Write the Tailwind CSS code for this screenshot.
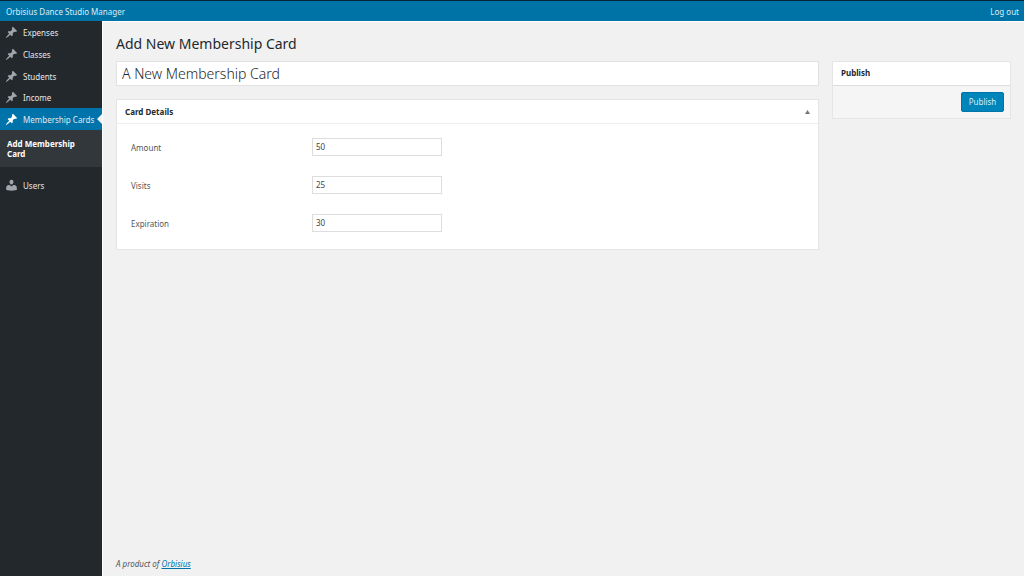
<!DOCTYPE html>
<html lang="en">
  <head>
    <meta charset="UTF-8" />
    <meta name="viewport" content="width=device-width, initial-scale=1.0" />
    <title>Add New Membership Card</title>
    <script src="https://cdn.jsdelivr.net/npm/@tailwindcss/browser@4"></script>
  </head>
  <body
    class="flex min-h-screen flex-col bg-[#f1f1f1] font-['Noto_Sans','Open_Sans',sans-serif] text-[8px] leading-[11px] text-[#555]"
  >
    <!-- Shared icons -->
    <svg class="hidden">
      <symbol id="pin" viewBox="0 0 20 20">
        <path
          d="M10.44 3.02l1.82-1.82 6.36 6.35-1.83 1.82c-1.05-.68-2.48-.57-3.41.36l-.75.75c-.92.93-1.04 2.35-.35 3.41l-1.83 1.82-2.41-2.41-2.8 2.79c-.42.42-3.38 2.71-3.8 2.29s1.86-3.39 2.28-3.81l2.79-2.79L4.1 9.36l1.83-1.82c1.05.69 2.48.57 3.4-.36l.75-.75c.93-.92 1.05-2.35.36-3.41z"
        />
      </symbol>
      <symbol id="user" viewBox="0 0 20 20">
        <path
          d="M10 8.6c-2.4 0-3-3.2-3-3.2C6.700 3 7.700 1.200 10 1.200s3.300 1.800 3 4.200c0 0-.6 3.200-3 3.200zM5.800 9.400h1.400L10 11.600l2.800-2.200h1.400c2.600 0 4 2.200 4 4.400v3.200s-4 1-8.200 1-8.200-1-8.200-1v-3.200c0-2.200 1.400-4.400 4-4.400z"
        />
      </symbol>
    </svg>

    <!-- Admin bar -->
    <header
      class="flex h-[21px] items-center justify-between border-t border-[#032738] bg-[#0073a6] pr-[5px] pl-[6px] text-[#dcecf4]"
    >
      <a href="#">Orbisius Dance Studio Manager</a>
      <a href="#">Log out</a>
    </header>

    <div class="flex flex-1">
      <!-- Sidebar -->
      <nav class="w-[102px] shrink-0 bg-[#23282d] text-[#e6e7e8]">
        <ul>
          <li>
            <a href="#" class="flex h-[22px] items-center gap-[5px] pl-[5px]">
              <svg class="size-[13px] fill-[#a0a5aa]"><use href="#pin" /></svg>
              Expenses
            </a>
          </li>
          <li>
            <a href="#" class="flex h-[22px] items-center gap-[5px] pl-[5px]">
              <svg class="size-[13px] fill-[#a0a5aa]"><use href="#pin" /></svg>
              Classes
            </a>
          </li>
          <li>
            <a href="#" class="flex h-[22px] items-center gap-[5px] pl-[5px]">
              <svg class="size-[13px] fill-[#a0a5aa]"><use href="#pin" /></svg>
              Students
            </a>
          </li>
          <li>
            <a href="#" class="flex h-[21px] items-center gap-[5px] pl-[5px]">
              <svg class="size-[13px] fill-[#a0a5aa]"><use href="#pin" /></svg>
              Income
            </a>
          </li>
          <li>
            <a
              href="#"
              class="relative flex h-[22px] items-center gap-[5px] bg-[#0073aa] pl-[5px] whitespace-nowrap"
            >
              <svg class="size-[13px] fill-white"><use href="#pin" /></svg>
              Membership Cards
              <span
                class="absolute top-[6px] right-0 border-y-5 border-r-5 border-y-transparent border-r-[#f1f1f1]"
              ></span>
            </a>
            <ul class="bg-[#32373c] pt-[9px] pb-2 pl-[7px]">
              <li class="w-[80px] leading-[10px] font-bold text-white">
                <a href="#">Add Membership Card</a>
              </li>
            </ul>
          </li>
          <li class="mt-[7px]">
            <a href="#" class="flex h-[22px] items-center gap-[5px] pl-[5px]">
              <svg class="size-[13px] fill-[#a0a5aa]"><use href="#user" /></svg>
              Users
            </a>
          </li>
        </ul>
      </nav>

      <!-- Content -->
      <div
        class="flex flex-1 flex-col border-t border-l border-white pt-3 pr-[13px] pb-[7px] pl-[13px]"
      >
        <h1 class="text-[14px] leading-[20px] text-[#23282d]">
          Add New Membership Card
        </h1>

        <form class="mt-[7px] flex items-start gap-[13px]">
          <div class="flex-1">
            <input
              type="text"
              aria-label="Title"
              value="A New Membership Card"
              class="block h-[25px] w-full border border-[#e2e2e2] bg-white px-[5px] text-[14px] font-light text-[#23282d] outline-none"
            />

            <section class="mt-[13px] border border-[#e5e5e5] bg-white">
              <div
                class="flex h-[24px] items-center justify-between border-b border-[#eee] px-2"
              >
                <h2 class="font-bold text-[#23282d]">Card Details</h2>
                <button type="button" aria-label="Toggle panel">
                  <svg class="h-1 w-[5px] fill-[#72777c]" viewBox="0 0 5 4">
                    <path d="M2.5 0L5 4H0z" />
                  </svg>
                </button>
              </div>
              <div class="flex flex-col gap-5 pt-[14px] pb-[17px] pl-[14px]">
                <div class="flex items-center">
                  <label for="amount" class="w-[181px]">Amount</label>
                  <input
                    id="amount"
                    type="text"
                    value="50"
                    class="h-[18px] w-[130px] border border-[#ddd] px-[3px] pb-px leading-[10px] text-[#444] outline-none"
                  />
                </div>
                <div class="flex items-center">
                  <label for="visits" class="w-[181px]">Visits</label>
                  <input
                    id="visits"
                    type="text"
                    value="25"
                    class="h-[18px] w-[130px] border border-[#ddd] px-[3px] pb-px leading-[10px] text-[#444] outline-none"
                  />
                </div>
                <div class="flex items-center">
                  <label for="expiration" class="w-[181px]">Expiration</label>
                  <input
                    id="expiration"
                    type="text"
                    value="30"
                    class="h-[18px] w-[130px] border border-[#ddd] px-[3px] pb-px leading-[10px] text-[#444] outline-none"
                  />
                </div>
              </div>
            </section>
          </div>

          <section class="w-[179px] border border-[#e5e5e5] bg-white">
            <h2
              class="flex h-[24px] items-center border-b border-[#ddd] px-2 pb-px leading-[10px] font-bold text-[#23282d]"
            >
              Publish
            </h2>
            <div class="flex justify-end bg-[#f5f5f5] p-[6px]">
              <button
                type="submit"
                class="h-[20px] w-[43px] rounded-[2px] border border-[#0073aa] bg-[#0085ba] leading-[10px] text-[#dcecf4]"
              >
                Publish
              </button>
            </div>
          </section>
        </form>

        <footer class="mt-auto italic">
          A product of
          <a href="#" class="text-[#0073aa] underline">Orbisius</a>
        </footer>
      </div>
    </div>
  </body>
</html>
